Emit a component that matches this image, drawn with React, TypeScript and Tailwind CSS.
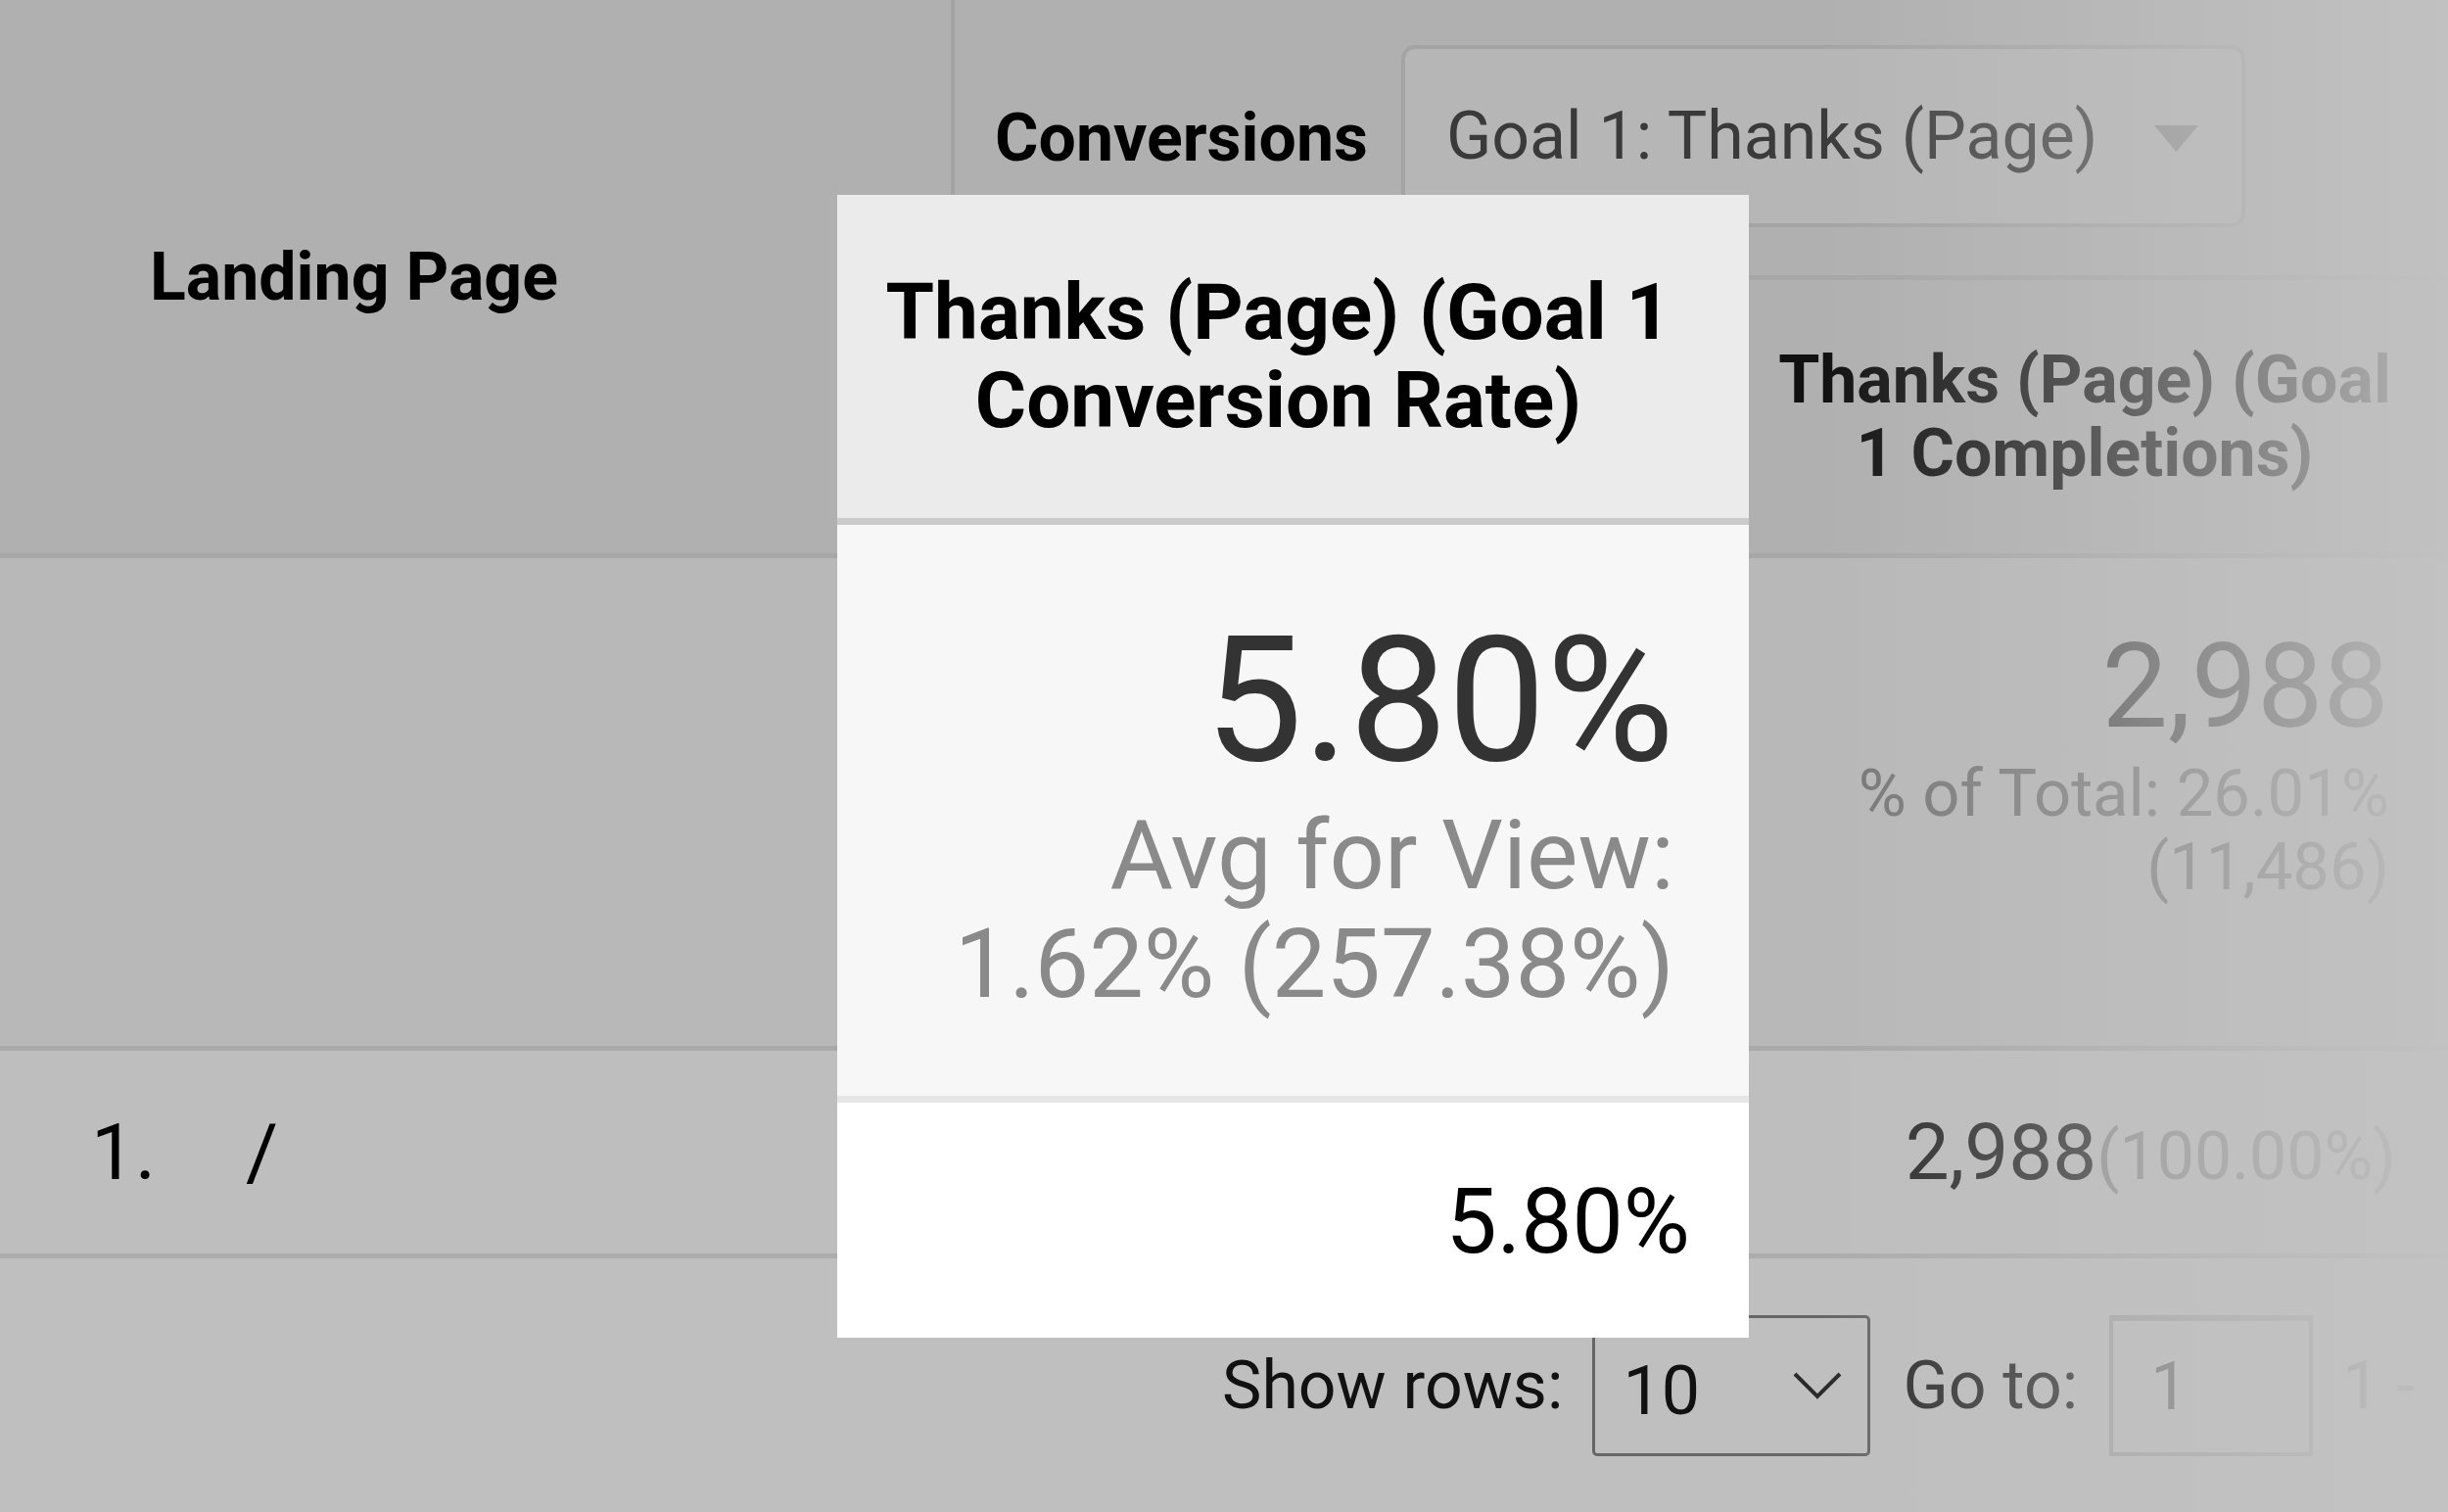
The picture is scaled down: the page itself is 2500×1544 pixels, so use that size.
import type { ReactNode } from "react";

function DropdownArrow() {
  return (
    <svg width="45" height="27" viewBox="0 0 45 27" aria-hidden="true">
      <polygon points="0,0 45,0 22.5,27" fill="#8a8a8a" />
    </svg>
  );
}

function Chevron() {
  return (
    <svg width="50" height="28" viewBox="0 0 50 28" aria-hidden="true">
      <polyline points="2,2 25,25 48,2" fill="none" stroke="#2a2a2a" strokeWidth="4" />
    </svg>
  );
}

function HeaderRow() {
  return (
    <div className="flex h-[570px] border-b-[5px] border-[#a7a7a7] bg-[#b0b0b0]">
      <div className="flex w-[971px] items-center pl-[153px] text-[68px] font-bold text-black">
        Landing Page
      </div>

      <div className="flex flex-1 flex-col border-l-[4px] border-[#a2a2a2]">
        <div className="flex h-[286px] items-center border-b-[5px] border-[#a6a6a6] pl-[41px]">
          <span className="text-[68px] font-bold text-black">Conversions</span>
          <div className="ml-[34px] -mt-[4px] flex h-[186px] w-[862px] items-center rounded-[14px] border-[4px] border-[#a4a4a4] bg-[#b6b6b6] pl-[42px]">
            <span className="text-[68px] text-[#3a3a3a]">Goal 1: Thanks (Page)</span>
            <span className="ml-[58px] mt-[6px]">
              <DropdownArrow />
            </span>
          </div>
        </div>

        <div className="flex flex-1">
          {/* conversion-rate column header sits under the callout */}
          <div className="w-[811px]" />
          <div className="flex w-[686px] items-center justify-center text-center text-[68px] leading-[75px] font-bold text-[#111]">
            Thanks (Page) (Goal
            <br />1 Completions)
          </div>
        </div>
      </div>
    </div>
  );
}

function SummaryRow() {
  return (
    <div className="flex h-[503px] justify-end border-b-[5px] border-[#a9a9a9] bg-[#b8b8b8] pt-[63px] pr-[60px]">
      <div className="flex flex-col items-end text-right">
        <span className="text-[120px] leading-[137px] text-[#4a4a4a]">2,988</span>
        <span className="mt-[3px] text-[67px] leading-[75px] text-[#767676]">
          % of Total: 26.01%
        </span>
        <span className="text-[67px] leading-[75px] text-[#767676]">(11,486)</span>
      </div>
    </div>
  );
}

function DataRow() {
  return (
    <div className="flex h-[212px] items-center border-b-[5px] border-[#acacac] bg-[#bebebe] pr-[53px] pl-[93px]">
      <span className="text-[80px] text-black">1.</span>
      <span className="ml-[92px] text-[80px] text-black">/</span>
      <div className="ml-auto flex items-baseline">
        <span className="text-[80px] text-[#262626]">2,988</span>
        <span className="text-[68px] text-[#8c8c8c]">(100.00%)</span>
      </div>
    </div>
  );
}

function Pager() {
  return (
    <div className="flex flex-1 items-center bg-[#bfbfbf] pl-[1248px]">
      <span className="text-[68px] text-[#111]">Show rows:</span>
      <div className="ml-[30px] flex h-[144px] w-[284px] items-center justify-between rounded-[5px] border-[3px] border-[#666] pr-[26px] pl-[28px]">
        <span className="mt-[12px] text-[70px] text-[#111]">10</span>
        <Chevron />
      </div>
      <span className="ml-[33px] text-[68px] text-[#2a2a2a]">Go to:</span>
      <div className="ml-[32px] flex h-[144px] w-[208px] items-center border-[4px] border-t-[6px] border-[#a3a3a3] pl-[38px]">
        <span className="text-[68px] text-[#6a6a6a]">1</span>
      </div>
      <span className="ml-[30px] text-[68px] text-[#8a8a8a]">1 -</span>
    </div>
  );
}

function CalloutSection({ className, children }: { className: string; children: ReactNode }) {
  return <div className={className}>{children}</div>;
}

function MetricCallout() {
  return (
    <div className="absolute top-[199px] left-[855px] flex h-[1167px] w-[931px] flex-col">
      <CalloutSection className="flex h-[330px] items-center justify-center bg-[#ebebeb] pr-[30px] text-center text-[80px] leading-[90px] font-bold text-black">
        <div>
          Thanks (Page) (Goal 1
          <br />
          Conversion Rate)
        </div>
      </CalloutSection>
      <div className="h-[7px] bg-[#cbcbcb]" />
      <CalloutSection className="flex h-[583px] flex-col items-end bg-[#f7f7f7] pt-[90px] pr-[76px] text-right">
        <span className="text-[179px] leading-[178px] text-[#333]">5.80%</span>
        <span className="mt-[14px] text-[99px] leading-[111px] text-[#8a8a8a]">
          Avg for View:
          <br />
          1.62% (257.38%)
        </span>
      </CalloutSection>
      <div className="h-[7px] bg-[#e6e6e6]" />
      <CalloutSection className="flex flex-1 justify-end bg-white pt-[75px] pr-[60px]">
        <span className="text-[93px] leading-[93px] text-black">5.80%</span>
      </CalloutSection>
    </div>
  );
}

export default function App() {
  return (
    <div className="relative flex h-[1544px] w-[2500px] flex-col overflow-hidden bg-[#bfbfbf] font-['Roboto',sans-serif]">
      <HeaderRow />
      <SummaryRow />
      <DataRow />
      <Pager />

      {/* fade-out over the right edge of the table */}
      <div className="pointer-events-none absolute top-0 right-0 bottom-0 left-[1860px] bg-linear-to-r from-[#c2c2c2]/0 to-[#c2c2c2]/95" />

      <MetricCallout />
    </div>
  );
}
